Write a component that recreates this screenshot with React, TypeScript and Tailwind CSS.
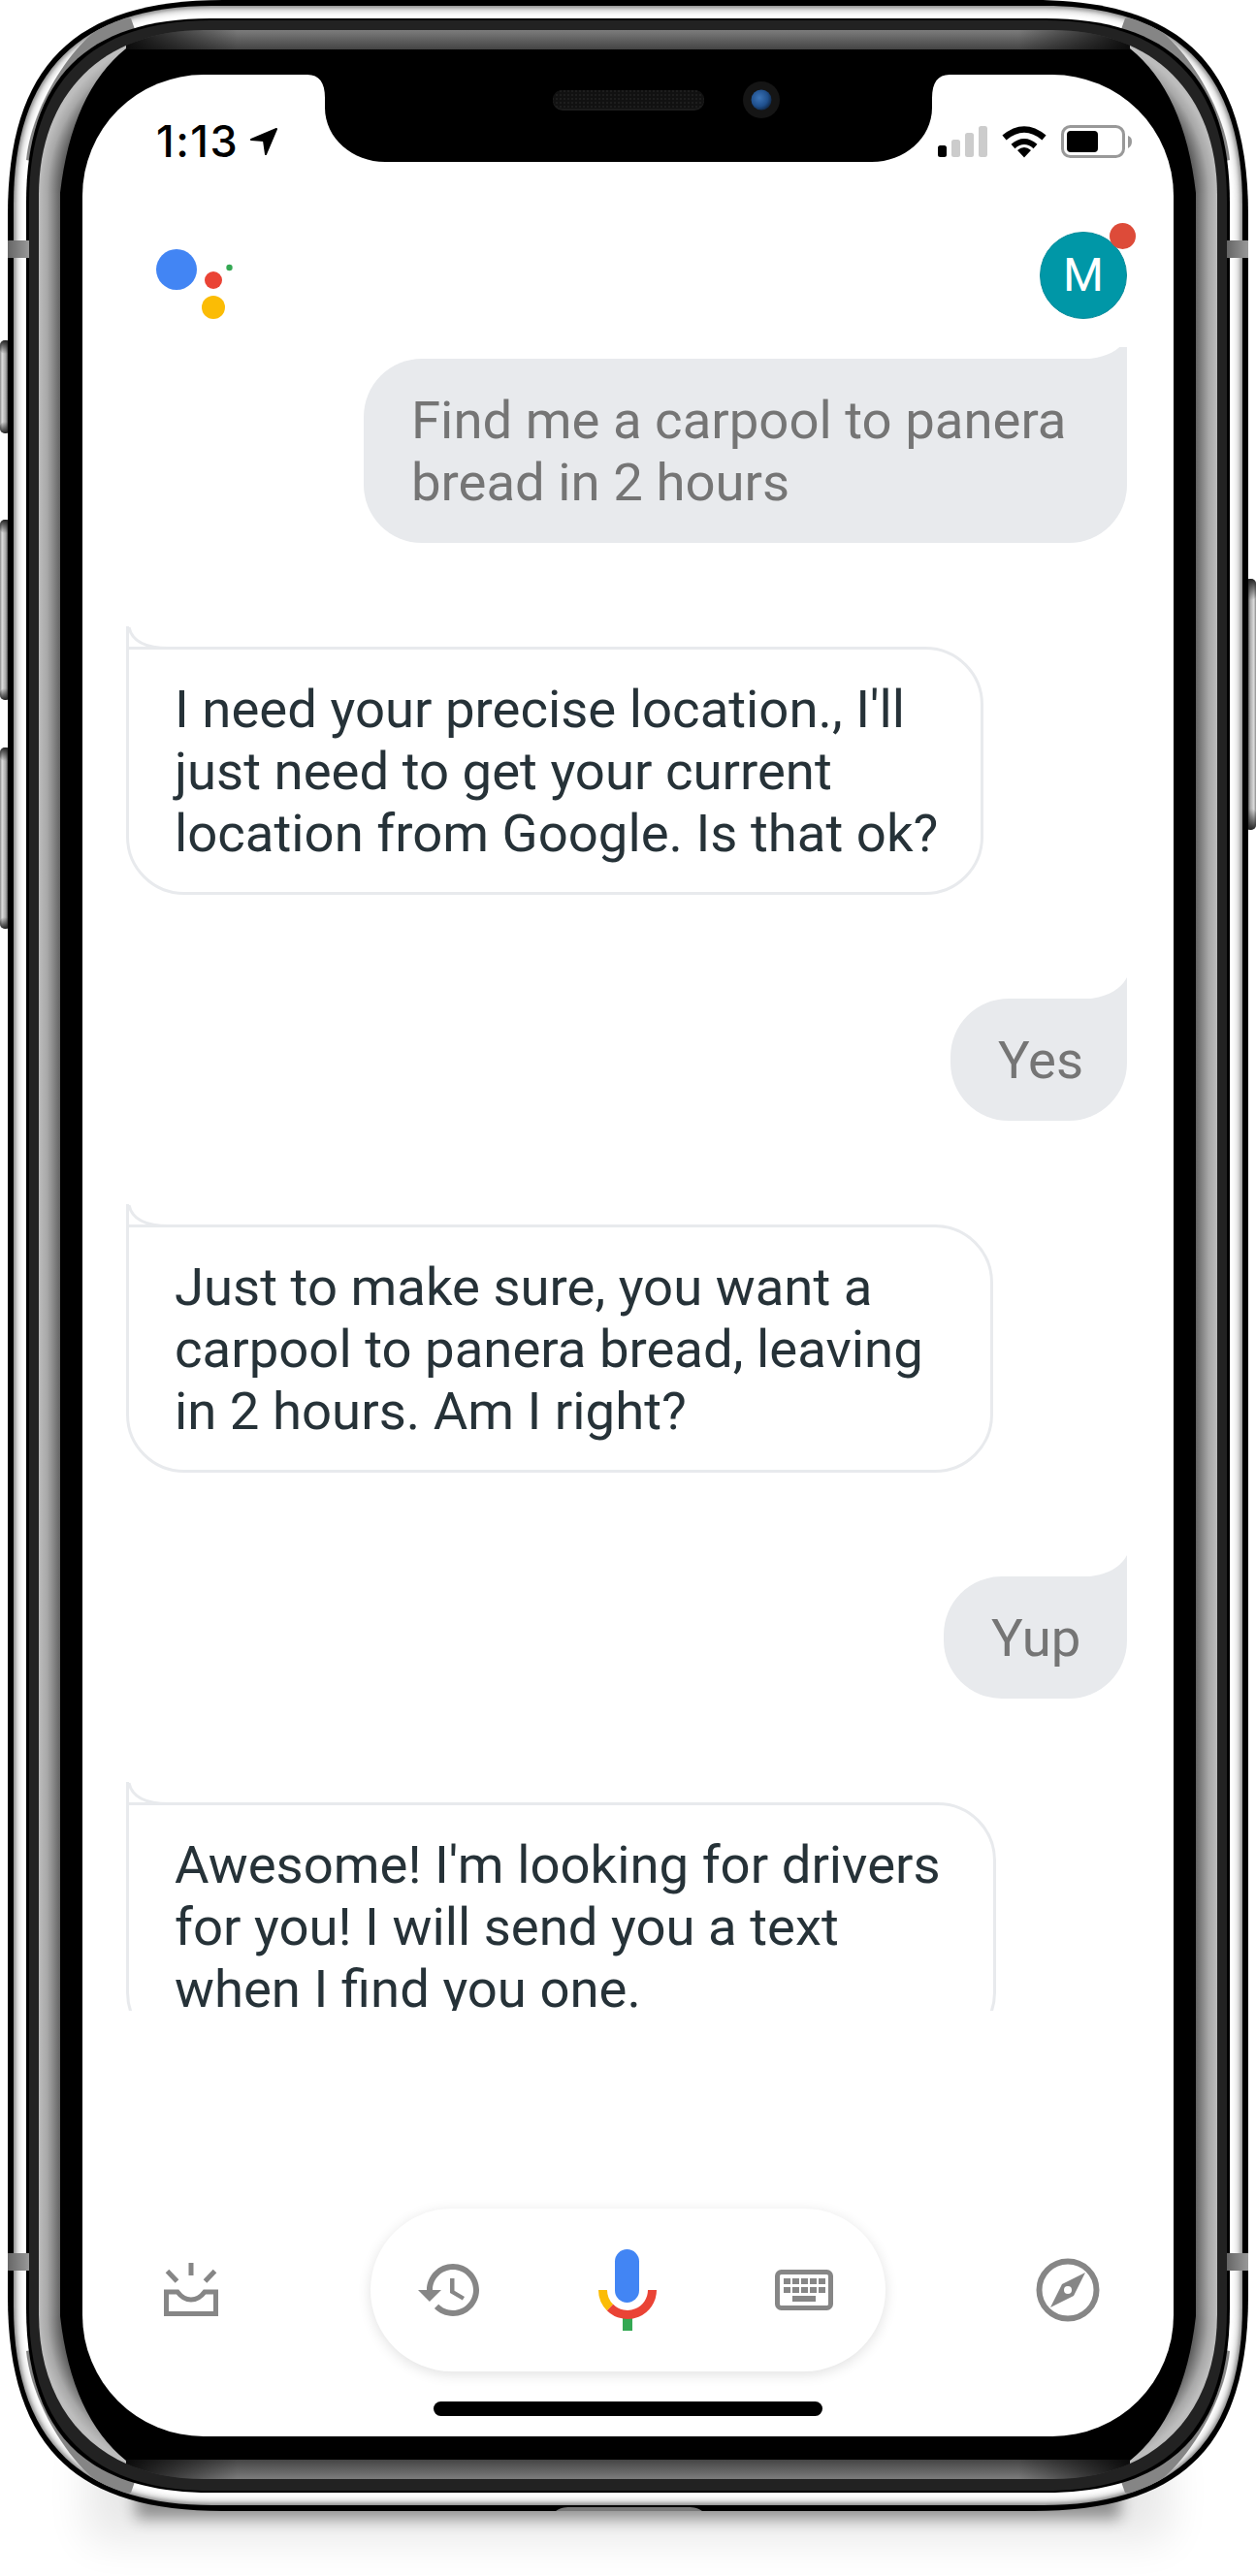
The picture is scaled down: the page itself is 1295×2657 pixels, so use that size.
import React from "react";

const rc = (x0: number, y0: number, x1: number, y1: number, e: number, d: number) =>
  `M${x0 + e} ${y0}H${x1 - e}C${x1 - d} ${y0} ${x1} ${y0 + d} ${x1} ${y0 + e}V${y1 - e}C${x1} ${y1 - d} ${x1 - d} ${y1} ${x1 - e} ${y1}H${x0 + e}C${x0 + d} ${y1} ${x0} ${y1 - d} ${x0} ${y1 - e}V${y0 + e}C${x0} ${y0 + d} ${x0 + d} ${y0} ${x0 + e} ${y0}Z`;

const corners = [
  { id: "tl", t: "" },
  { id: "tr", t: "translate(1295 0) scale(-1 1)" },
  { id: "bl", t: "translate(0 2590) scale(1 -1)" },
  { id: "br", t: "translate(1295 2590) scale(-1 -1)" },
];

const ramp = ["#9c9c9c", "#ababab", "#bcbcbc", "#cdcdcd", "#dcdcdc", "#e6e6e6", "#eeeeee", "#f3f3f3", "#f8f8f8", "#fbfbfb", "#fdfdfd", "#ffffff", "#ffffff"];

function Bezel() {
  const r1 = rc(14, 6, 1281, 2584, 205, 68);
  const r4 = rc(40, 31, 1255, 2557, 170, 66);
  return (
    <svg className="absolute left-0 top-0" width="1295" height="2657" viewBox="0 0 1295 2657">
      <defs>
        <filter id="b1" x="-20%" y="-50%" width="140%" height="200%"><feGaussianBlur stdDeviation="8" /></filter>
        <filter id="b2" x="-20%" y="-50%" width="140%" height="200%"><feGaussianBlur stdDeviation="22" /></filter>
        <linearGradient id="gSide" x1="0" x2="1" y1="0" y2="0">
          <stop offset="0" stopColor="#bdbdbd" /><stop offset="0.4" stopColor="#a8a8a8" /><stop offset="1" stopColor="#636363" />
        </linearGradient>
        <linearGradient id="gTop" x1="0" x2="0" y1="0" y2="1">
          <stop offset="0" stopColor="#7c7c7c" /><stop offset="1" stopColor="#444444" />
        </linearGradient>
        <linearGradient id="fade" gradientUnits="userSpaceOnUse" x1="130" x2="245" y1="0" y2="0">
          <stop offset="0" stopColor="#000" stopOpacity="0.85" /><stop offset="1" stopColor="#000" stopOpacity="0" />
        </linearGradient>
        <radialGradient id="gCorner" gradientUnits="userSpaceOnUse" cx="208" cy="199" r="172">
          <stop offset="0.8" stopColor="#444444" /><stop offset="0.85" stopColor="#636363" /><stop offset="0.926" stopColor="#a8a8a8" /><stop offset="0.977" stopColor="#bdbdbd" />
        </radialGradient>
        <linearGradient id="btn" x1="0" x2="1" y1="0" y2="0">
          <stop offset="0" stopColor="#8a8a8a" /><stop offset="0.2" stopColor="#dcdcdc" /><stop offset="0.55" stopColor="#a8a8a8" /><stop offset="0.8" stopColor="#333333" /><stop offset="1" stopColor="#222222" />
        </linearGradient>
        <linearGradient id="btnEnd" x1="0" x2="0" y1="0" y2="1">
          <stop offset="0" stopColor="#222" /><stop offset="1" stopColor="#222" stopOpacity="0" />
        </linearGradient>
        <linearGradient id="ant" x1="0" x2="1" y1="0" y2="0">
          <stop offset="0" stopColor="#666666" /><stop offset="1" stopColor="#999999" />
        </linearGradient>
        <clipPath id="c1"><path d={r1} /></clipPath>
        <clipPath id="c4"><path d={r4} /></clipPath>
      </defs>

      <rect x="140" y="2530" width="1015" height="68" fill="#000" opacity="0.38" filter="url(#b1)" />
      <rect x="90" y="2520" width="1115" height="100" fill="#000" opacity="0.09" filter="url(#b2)" />

      {[[351, 96], [536, 186], [771, 187]].map(([y, h]) => (
        <g key={y}>
          <rect x="0" y={y} width="11" height={h} rx="5" fill="url(#btn)" />
          <rect x="0" y={y} width="11" height="14" rx="5" fill="url(#btnEnd)" />
          <rect x="0" y={y + h - 12} width="11" height="12" rx="5" fill="url(#btnEnd)" transform={`rotate(180 5.5 ${y + h - 6})`} />
        </g>
      ))}
      <g transform="translate(1295 0) scale(-1 1)">
        <rect x="0" y="597" width="11" height="259" rx="5" fill="url(#btn)" />
        <rect x="0" y="597" width="11" height="22" rx="5" fill="url(#btnEnd)" />
        <rect x="0" y="834" width="11" height="22" rx="5" fill="url(#btnEnd)" transform="rotate(180 5.5 845)" />
      </g>

      <path d={rc(8, 0, 1287, 2590, 222, 68)} fill="#000" />

      {ramp.map((color, i) => (
        <path key={i} d={rc(14 + i, 6 + i, 1281 - i, 2584 - i, 205 - (15 * i) / 12, 68 - (6 * i) / 12)} fill={color} />
      ))}
      <g clipPath="url(#c1)">
        {corners.map((c) => (
          <g key={c.id} transform={c.t}>
            <path d="M27 165C34 95 99 9 135 19L200 200Z" fill="#858585" />
          </g>
        ))}
      </g>

      <path d={rc(27, 19, 1268, 2571, 190, 62)} fill="#000" />
      <path d={rc(30, 21, 1265, 2569, 187, 64)} fill="#222222" />

      <path d={r4} fill="#000" />
      <g clipPath="url(#c4)">
        <rect x="40" y="199" width="22" height="2190" fill="url(#gSide)" />
        <rect x="1233" y="199" width="22" height="2190" fill="url(#gSide)" transform="translate(2488 0) scale(-1 1)" />
        <rect x="100" y="31" width="1095" height="20" fill="url(#gTop)" />
        <rect x="100" y="2537" width="1095" height="20" fill="url(#gTop)" transform="translate(0 5094) scale(1 -1)" />
        {corners.map((c) => (
          <g key={c.id} transform={c.id.startsWith("b") ? c.t.replace("2590", "2588") : c.t}>
            <rect x="100" y="31" width="145" height="20" fill="url(#fade)" />
            <path d="M30 199L30 30L130 30L130 50Q74 95 62 199Z" fill="url(#gCorner)" />
          </g>
        ))}
      </g>

      {[[8, 248], [8, 2324], [1265, 248], [1265, 2324]].map(([x, y]) => (
        <rect key={`${x}-${y}`} x={x} y={y} width="22" height="18" fill="url(#ant)" />
      ))}
      <path d="M573 2590C578 2586 584 2586 590 2586H707C713 2586 719 2586 724 2590Z" fill="#777777" />
    </svg>
  );
}

function Notch() {
  return (
    <svg className="absolute left-[232px] top-0" width="662" height="90" viewBox="0 0 662 90">
      <defs>
        <radialGradient id="lens" cx="0.4" cy="0.4" r="0.7">
          <stop offset="0" stopColor="#3b74b8" /><stop offset="0.6" stopColor="#1f4f8c" /><stop offset="1" stopColor="#0b1d35" />
        </radialGradient>
        <pattern id="mesh" width="4" height="4" patternUnits="userSpaceOnUse">
          <rect width="4" height="4" fill="#111111" />
          <rect width="2" height="2" fill="#1d1d1d" />
        </pattern>
      </defs>
      <path d="M0 0H662C650 0 644 8 644 24V34C644 66 615 90 582 90H80C47 90 18 66 18 34V24C18 8 12 0 0 0Z" fill="#000" />
      <rect x="253" y="16" width="156" height="21" rx="10" fill="#1c1c1c" />
      <rect x="253" y="16" width="156" height="19" rx="9.5" fill="url(#mesh)" />
      <ellipse cx="468" cy="26" rx="19" ry="19" fill="#151515" />
      <ellipse cx="468" cy="26" rx="10.5" ry="10.5" fill="url(#lens)" />
    </svg>
  );
}

function StatusBar() {
  return (
    <div className="flex h-[33px] items-center justify-between pl-[76px] pr-[43px]">
      <div className="flex items-center gap-[11px]">
        <span className="font-[Inter,sans-serif] text-[45px] font-medium leading-[33px] tracking-[1.5px] text-black">1:13</span>
        <svg width="30" height="30" viewBox="0 0 30 30">
          <path d="M2 13L28 2L17 28L15 14Z" fill="#000" stroke="#000" strokeWidth="2" strokeLinejoin="round" />
        </svg>
      </div>
      <div className="flex items-center">
        <svg width="200" height="34" viewBox="0 0 200 34">
          <rect x="0" y="21" width="9" height="12" rx="2.5" fill="#000" />
          <rect x="14" y="15" width="9" height="18" rx="2.5" fill="#cccccc" />
          <rect x="28" y="8" width="9" height="25" rx="2.5" fill="#cccccc" />
          <rect x="42" y="1" width="9" height="32" rx="2.5" fill="#cccccc" />
          <g transform="translate(66 0)">
            <path d="M2.5 13Q23 -4 43.5 13" stroke="#000" strokeWidth="6.5" fill="none" />
            <path d="M11.5 22Q23 12 34.5 22" stroke="#000" strokeWidth="6" fill="none" />
            <path d="M16 26Q23 20 30 26L23 33.5Z" fill="#000" />
          </g>
          <rect x="128.5" y="1.5" width="63" height="31" rx="8" fill="none" stroke="#999999" strokeWidth="3" />
          <rect x="133" y="6" width="32" height="22" rx="4" fill="#000" />
          <path d="M196 11C199 12 200 14 200 17C200 20 199 22 196 24Z" fill="#999999" />
        </svg>
      </div>
    </div>
  );
}

function AssistantLogo() {
  return (
    <svg width="80" height="72" viewBox="0 0 80 72">
      <circle cx="21" cy="21" r="21" fill="#4285f4" />
      <circle cx="59" cy="32" r="9" fill="#ea4335" />
      <circle cx="59" cy="60" r="12" fill="#fbbc05" />
      <circle cx="75.5" cy="19" r="3.2" fill="#34a853" />
    </svg>
  );
}

function UserBubble({ w, children }: { w: string; children: React.ReactNode }) {
  return (
    <div className={`relative self-end rounded-[60px] rounded-tr-none bg-[#e8eaed] py-[31px] pl-[49px] whitespace-nowrap text-[#757575] ${w}`}>
      <svg className="absolute right-0 top-[-22px]" width="50" height="23" viewBox="0 0 50 23">
        <path d="M50 0C42 15 26 22 0 23H50Z" fill="#e8eaed" />
      </svg>
      {children}
    </div>
  );
}

function BotBubble({ w, children }: { w: string; children: React.ReactNode }) {
  return (
    <div className={`relative rounded-[60px] rounded-tl-none border-[3px] border-[#e8eaed] bg-white py-[29px] pl-[47px] whitespace-nowrap text-[#263238] ${w}`}>
      <svg className="absolute left-[-3px] top-[-27px]" width="44" height="28" viewBox="0 0 44 28">
        <path d="M1.5 3V28" stroke="#e8eaed" strokeWidth="3" fill="none" />
        <path d="M3 4C6 18 20 25.5 44 25.5" stroke="#e8eaed" strokeWidth="3" fill="none" />
      </svg>
      {children}
    </div>
  );
}

function InboxIcon() {
  return (
    <svg width="56" height="56" viewBox="0 0 56 56" fill="none" stroke="#868686">
      <path d="M28 0V13" strokeWidth="5" />
      <path d="M3.5 8.5L13.5 19" strokeWidth="5" />
      <path d="M52.5 8.5L42.5 19" strokeWidth="5" />
      <path d="M2.5 30H14Q20 38 28 38Q36 38 42 30H53.5V52.5H2.5Z" strokeWidth="5" />
    </svg>
  );
}

function HistoryIcon() {
  return (
    <svg width="63" height="54" viewBox="1 3 21 18">
      <path fill="#868686" d="M13 3c-4.97 0-9 4.03-9 9H1l3.89 3.89.07.14L9 12H6c0-3.87 3.13-7 7-7s7 3.13 7 7-3.13 7-7 7c-1.93 0-3.68-.79-4.94-2.06l-1.42 1.42C8.27 19.99 10.51 21 13 21c4.97 0 9-4.03 9-9s-4.03-9-9-9zm-1 5v5l4.28 2.54.72-1.21-3.5-2.08V8H12z" />
    </svg>
  );
}

function MicIcon() {
  return (
    <svg width="60" height="84" viewBox="0 0 60 84">
      <rect x="17" y="0" width="25" height="55" rx="12.5" fill="#4285f4" />
      <path d="M25 70H35V84H25Z" fill="#34a853" />
      <path d="M4.5 42A25.5 25.5 0 0 0 12 60" stroke="#fbbc05" strokeWidth="9" fill="none" />
      <path d="M12 60A25.5 25.5 0 0 0 55.5 42" stroke="#ea4335" strokeWidth="9" fill="none" />
    </svg>
  );
}

function KeyboardIcon() {
  return (
    <svg width="60" height="42" viewBox="0 0 60 42" fill="#868686">
      <rect x="2.5" y="2.5" width="55" height="37" rx="4" fill="none" stroke="#868686" strokeWidth="5" />
      {[9, 18, 27, 36, 45].map((x) => (
        <g key={x}>
          <rect x={x} y="9" width="7" height="6" />
          <rect x={x} y="18" width="7" height="6" />
        </g>
      ))}
      <rect x="18" y="27" width="24" height="6" />
    </svg>
  );
}

function CompassIcon() {
  return (
    <svg width="66" height="66" viewBox="0 0 66 66">
      <circle cx="33" cy="33" r="29.5" fill="none" stroke="#868686" strokeWidth="6" />
      <path d="M51 15L39 39L15 51L27 27Z" fill="#868686" />
      <circle cx="33" cy="33" r="4" fill="#fff" />
    </svg>
  );
}

export default function App() {
  return (
    <div className="relative h-[2657px] w-[1295px] overflow-hidden bg-white pl-[85px] pt-[77px] font-[Roboto,sans-serif]">
      <Bezel />
      <div className="relative flex h-[2436px] w-[1125px] flex-col overflow-hidden rounded-[125px] bg-white">
        <Notch />
        <div className="pt-[52px]">
          <StatusBar />
        </div>
        <div className="mt-[77px] flex h-[90px] items-start justify-between pl-[76px] pr-[48px]">
          <div className="pt-[18px]">
            <AssistantLogo />
          </div>
          <div className="relative flex h-[90px] w-[90px] items-center justify-center rounded-full border border-[#0a8c9b] bg-[#0097a7] text-[48px] leading-none text-white">
            M
            <span className="absolute right-[-10px] top-[-10px] h-[27px] w-[27px] rounded-full bg-[#dd4b39]" />
          </div>
        </div>
        <div className="mt-[29px] flex h-[1716px] flex-col gap-[107px] overflow-hidden pl-[45px] pr-[48px] pt-[12px] text-[54.5px] leading-[64px]">
          <UserBubble w="w-[787px]">Find me a carpool to panera<br />bread in 2 hours</UserBubble>
          <BotBubble w="w-[884px]">I need your precise location., I'll<br />just need to get your current<br />location from Google. Is that ok?</BotBubble>
          <UserBubble w="w-[182px]">Yes</UserBubble>
          <BotBubble w="w-[894px]">Just to make sure, you want a<br />carpool to panera bread, leaving<br />in 2 hours. Am I right?</BotBubble>
          <UserBubble w="w-[189px]">Yup</UserBubble>
          <BotBubble w="w-[897px]">Awesome! I'm looking for drivers<br />for you! I will send you a text<br />when I find you one.</BotBubble>
        </div>
        <div className="mt-[204px] flex h-[168px] items-center pl-[84px]">
          <InboxIcon />
          <div className="ml-[157px] flex h-[168px] w-[531px] items-center rounded-full bg-white pl-[49px] shadow-[0_3px_14px_rgba(0,0,0,0.12)]">
            <HistoryIcon />
            <div className="ml-[123px]"><MicIcon /></div>
            <div className="ml-[122px]"><KeyboardIcon /></div>
          </div>
          <div className="ml-[155px]"><CompassIcon /></div>
        </div>
        <div className="mx-auto mt-[31px] h-[15px] w-[401px] rounded-full bg-black" />
      </div>
    </div>
  );
}
